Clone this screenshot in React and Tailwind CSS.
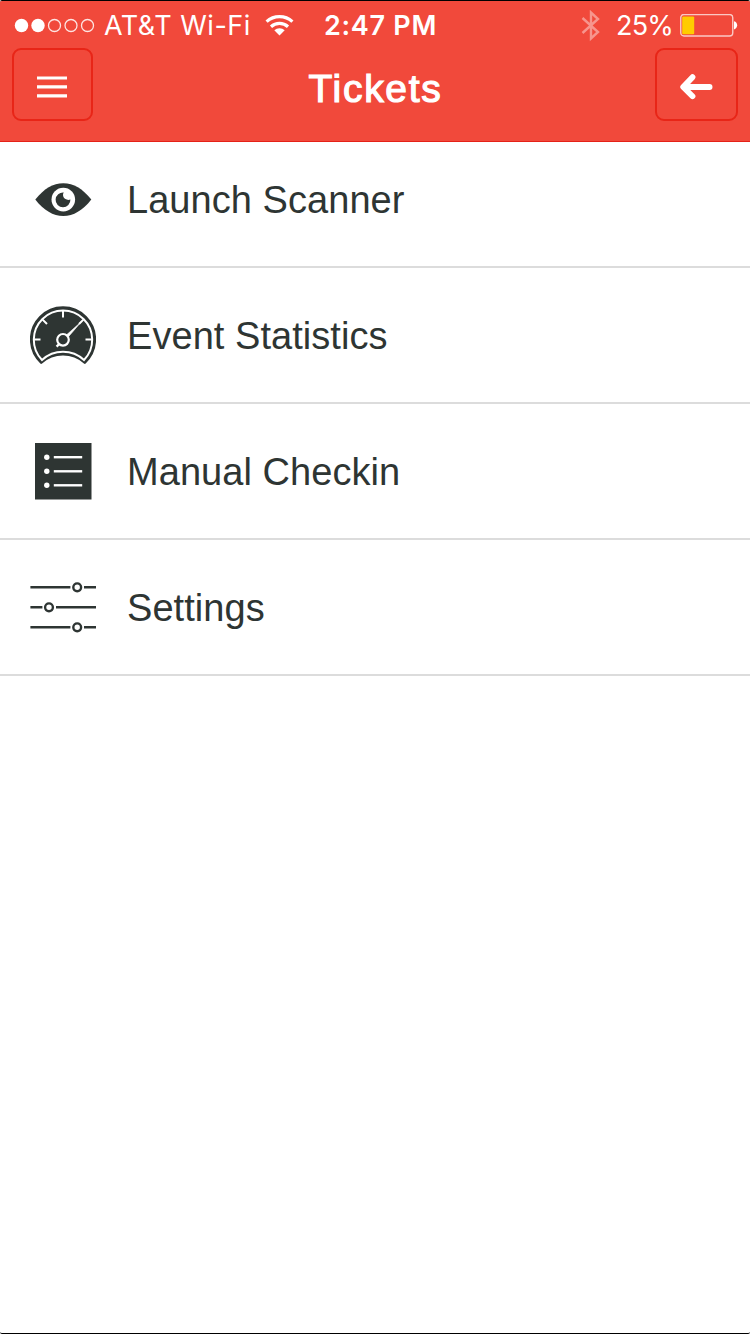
const SignalDots = () => (
  <svg width="82" height="16" viewBox="0 0 82 16" className="block shrink-0">
    <circle cx="7.5" cy="7.5" r="6.7" fill="white" />
    <circle cx="24" cy="7.5" r="6.7" fill="white" />
    {[40.5, 57, 73.5].map((cx) => (
      <circle key={cx} cx={cx} cy="7.5" r="6" fill="none" stroke="white" strokeOpacity="0.85" strokeWidth="1.3" />
    ))}
  </svg>
);

const WifiIcon = () => (
  <svg width="30" height="22" viewBox="0 0 30 22" className="block shrink-0" fill="none" stroke="white">
    <path d="M1.6 6.7a19 19 0 0 1 25.8 0" strokeWidth="3.2" />
    <path d="M6 11.7a12.6 12.6 0 0 1 17 0" strokeWidth="3.2" />
    <path d="M14.5 20.5l-5.2-5.2a7.5 7.5 0 0 1 10.4 0z" fill="white" stroke="none" />
  </svg>
);

const BluetoothIcon = () => (
  <svg width="20" height="32" viewBox="0 0 20 32" className="block shrink-0">
    <path d="M1.5 8l15.5 14L10 28.5V2.5l7 6.5-15.5 14" fill="none" stroke="white" strokeOpacity="0.42" strokeWidth="2.4" />
  </svg>
);

const BatteryIcon = () => (
  <svg width="58" height="24" viewBox="0 0 58 24" className="block shrink-0">
    <rect x="0.75" y="0.5" width="52" height="21.5" rx="3.2" fill="none" stroke="white" strokeOpacity="0.7" strokeWidth="1.4" />
    <rect x="2.2" y="2.4" width="12" height="17.8" rx="1" fill="#ffcc00" />
    <path d="M54 7.2c4.2 0.8 4.2 7.4 0 8.2z" fill="white" />
  </svg>
);

const MenuIcon = () => (
  <svg width="30" height="22" viewBox="0 0 30 22" className="block">
    <path d="M0 2h30M0 10.9h30M0 19.8h30" stroke="white" strokeWidth="3.2" />
  </svg>
);

const BackIcon = () => (
  <svg width="36" height="28" viewBox="0 0 36 28" className="block">
    <path d="M13.5 4.2L4.2 14L13.5 23.2M5 14h25.6" fill="none" stroke="white" strokeWidth="5.8" strokeLinecap="round" strokeLinejoin="round" />
  </svg>
);

const EyeIcon = () => (
  <svg width="66" height="66" viewBox="0 0 66 66" className="block">
    <path d="M5.3 32.6C14 21.5 23 16.2 33.3 16.2S52.6 21.5 61.3 32.6C52.6 43.7 43.6 49 33.3 49S14 43.7 5.3 32.6z" fill="#2e3533" />
    <circle cx="33.3" cy="32.6" r="11.8" fill="white" />
    <path d="M33.8 25.6C31.5 28.6 34.5 34.2 40.4 32.6A7.4 7.4 0 1 1 33.8 25.6z" fill="#2e3533" />
  </svg>
);

const GaugeIcon = () => (
  <svg width="66" height="66" viewBox="0 0 66 66" className="block">
    <path
      d="M11.2 60.6A31.8 31.8 0 1 1 54.8 60.6A32.7 32.7 0 0 0 11.2 60.6z"
      fill="#2e3533"
      stroke="#2e3533"
      strokeWidth="2.6"
      strokeLinejoin="round"
    />
    <path
      d="M12 58A29.2 29.2 0 1 1 54 58A31 31 0 0 0 12 58z"
      fill="none"
      stroke="white"
      strokeWidth="2"
    />
    <path d="M33 9v6.5M4 37.6h6.5M62 37.6h-6.5M12.6 17.6l4.4 4.4M53.4 17.6l-4.4 4.4" stroke="white" strokeWidth="2" />
    <path d="M36.4 33L51.6 19.4L38.4 34.8z" fill="white" stroke="white" strokeWidth="0.6" />
    <circle cx="33" cy="37.8" r="5.8" fill="#2e3533" stroke="white" strokeWidth="2.2" />
    <path d="M29.2 42l-2.6 2.6" stroke="white" strokeWidth="2.4" />
  </svg>
);

const ListIcon = () => (
  <svg width="66" height="66" viewBox="0 0 66 66" className="block">
    <rect x="5" y="5" width="56.5" height="56.5" fill="#2e3533" />
    {[19.2, 33.3, 47.3].map((y) => (
      <g key={y}>
        <circle cx="16.8" cy={y} r="2.7" fill="white" />
        <path d={`M23.8 ${y}h28.4`} stroke="white" strokeWidth="2.4" />
      </g>
    ))}
  </svg>
);

const SlidersIcon = () => (
  <svg width="66" height="66" viewBox="0 0 66 66" className="block" fill="none" stroke="#2e3533" strokeWidth="2.4">
    <path d="M0.4 13.3h40M54 13.3h12M0.4 33.3h12M26 33.3h40M0.4 53.3h40M54 53.3h12" />
    <circle cx="47.2" cy="13.3" r="3.9" />
    <circle cx="19" cy="33.3" r="3.9" />
    <circle cx="47.2" cy="53.3" r="3.9" />
  </svg>
);

const menuItems = [
  { label: 'Launch Scanner', icon: EyeIcon, row: 'h-[126px] pb-[9px]' },
  { label: 'Event Statistics', icon: GaugeIcon, row: 'h-[136px]' },
  { label: 'Manual Checkin', icon: ListIcon, row: 'h-[136px]' },
  { label: 'Settings', icon: SlidersIcon, row: 'h-[136px]' },
];

const StatusBar = () => (
  <div className="flex h-[47px] items-center pt-[2px] pl-[14px] pr-[12px] font-['Inter',sans-serif] text-[27px] leading-none text-white">
    <SignalDots />
    <span className="ml-[8px] w-[161px] whitespace-nowrap font-normal tracking-[0.5px]">AT&amp;T Wi-Fi</span>
    <WifiIcon />
    <span className="ml-[29px] w-[119px] whitespace-nowrap font-semibold tracking-[0.7px]">2:47 PM</span>
    <div className="ml-auto flex items-center">
      <BluetoothIcon />
      <span className="ml-[15px] w-[64px] whitespace-nowrap font-normal tracking-[-0.8px]">25%</span>
      <BatteryIcon />
    </div>
  </div>
);

const Header = () => (
  <header className="h-[141px] border-b border-[#e52118] bg-[#f1493b]">
    <StatusBar />
    <div className="flex items-start justify-between px-[12px]">
      <button className="flex h-[73px] w-[81px] items-center justify-center rounded-[9px] border-2 border-[#e82517] pt-[5px] pr-px">
        <MenuIcon />
      </button>
      <h1 className="pt-[18px] pl-[3px] text-[39px] leading-[46px] tracking-[1.7px] text-white [-webkit-text-stroke:1.2px_white]">
        Tickets
      </h1>
      <button className="flex h-[73px] w-[83px] items-center justify-center rounded-[9px] border-2 border-[#e82517] pt-[4px]">
        <BackIcon />
      </button>
    </div>
  </header>
);

export default function App() {
  return (
    <div className="flex h-[1334px] w-[750px] flex-col overflow-hidden rounded-[2px] border-y border-black bg-white font-['Liberation_Sans',Arial,sans-serif]">
      <Header />
      <ul>
        {menuItems.map(({ label, icon: Icon, row }) => (
          <li key={label} className={`flex items-center border-b-2 border-[#dcdcdc] pl-[30px] ${row}`}>
            <Icon />
            <span className="ml-[31px] pt-px text-[38px] leading-[46px] tracking-[0.05px] text-[#2e3533]">{label}</span>
          </li>
        ))}
      </ul>
    </div>
  );
}
